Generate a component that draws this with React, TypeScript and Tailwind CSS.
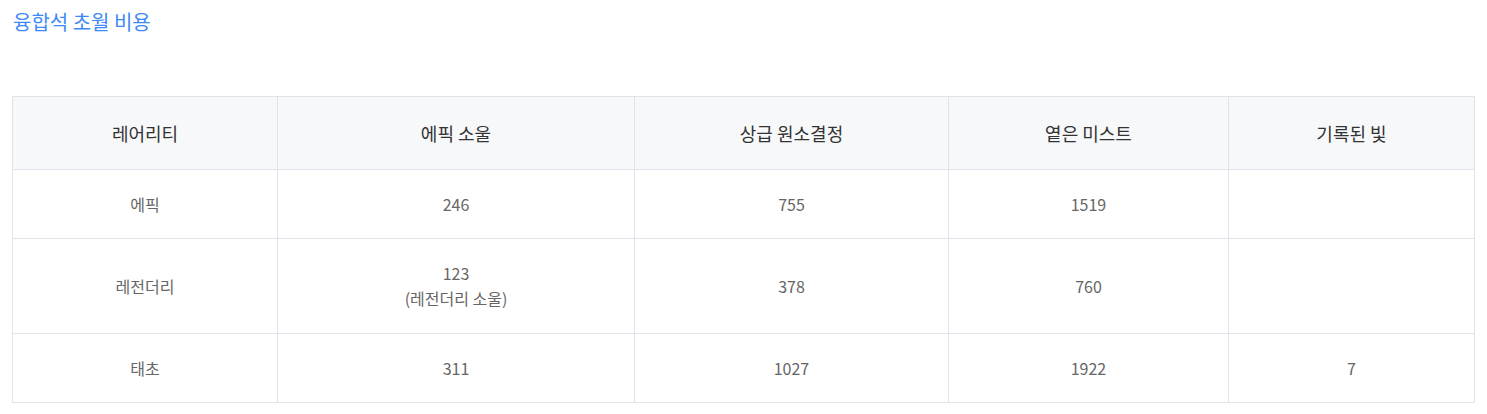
const rows = [
  { rarity: "에픽", soul: ["246"], stone: "755", mist: "1519", light: "" },
  { rarity: "레전더리", soul: ["123", "(레전더리 소울)"], stone: "378", mist: "760", light: "" },
  { rarity: "태초", soul: ["311"], stone: "1027", mist: "1922", light: "7" },
];

const headers = ["레어리티", "에픽 소울", "상급 원소결정", "옅은 미스트", "기록된 빛"];
const widths = ["w-[265px]", "w-[357px]", "w-[314px]", "w-[280px]", "w-[246px]"];

export default function App() {
  return (
    <div className="bg-white min-h-screen px-3 pt-[7px] font-['Noto_Sans_CJK_KR','Noto_Sans',sans-serif]">
      <h2 className="text-[20px] leading-[30px] text-[#3d8af7] pl-px">융합석 초월 비용</h2>

      <table className="mt-[59px] w-[1463px] border-collapse table-fixed">
        <colgroup>
          {widths.map((w, i) => (
            <col key={i} className={w} />
          ))}
        </colgroup>
        <thead>
          <tr className="bg-[#f7f8fa] h-[73px]">
            {headers.map((h) => (
              <th key={h} className="border border-[#e1e3ea] text-[18px] font-normal text-[#333333] text-center">
                {h}
              </th>
            ))}
          </tr>
        </thead>
        <tbody>
          {rows.map((r) => (
            <tr key={r.rarity} className={r.soul.length > 1 ? "h-[95px]" : "h-[69px]"}>
              <td className="border border-[#e1e3ea] text-[16px] text-[#666666] text-center">{r.rarity}</td>
              <td className="border border-[#e1e3ea] text-[16px] leading-[25px] text-[#666666] text-center">
                {r.soul.map((s) => (
                  <div key={s}>{s}</div>
                ))}
              </td>
              <td className="border border-[#e1e3ea] text-[16px] text-[#666666] text-center">{r.stone}</td>
              <td className="border border-[#e1e3ea] text-[16px] text-[#666666] text-center">{r.mist}</td>
              <td className="border border-[#e1e3ea] text-[16px] text-[#666666] text-center">{r.light}</td>
            </tr>
          ))}
        </tbody>
      </table>
    </div>
  );
}
